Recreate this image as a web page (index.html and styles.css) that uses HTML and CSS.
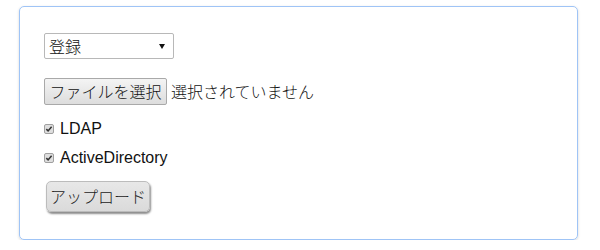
FILE: index.html
```html
<!DOCTYPE html>
<html lang="ja">
<head>
<meta charset="utf-8">
<title>Upload</title>
<link rel="stylesheet" href="styles.css">
</head>
<body>
<div class="card">
  <div class="row-select">
    <div class="select-wrap">
      <select class="select">
        <option>登録</option>
        <option>削除</option>
      </select>
      <span class="arrow"></span>
    </div>
  </div>
  <div class="row-file">
    <button class="file-btn" type="button">ファイルを選択</button>
    <span class="file-status">選択されていません</span>
  </div>
  <label class="check-row first">
    <span class="check"><svg width="10" height="10" viewBox="0 0 10 10"><path d="M2.3 5.1 L4.1 6.9 L7.6 2.7" fill="none" stroke="#333" stroke-width="1.5"/></svg></span>
    <span class="check-label">LDAP</span>
  </label>
  <label class="check-row">
    <span class="check"><svg width="10" height="10" viewBox="0 0 10 10"><path d="M2.3 5.1 L4.1 6.9 L7.6 2.7" fill="none" stroke="#333" stroke-width="1.5"/></svg></span>
    <span class="check-label">ActiveDirectory</span>
  </label>
  <div class="row-upload">
    <button class="upload-btn" type="button">アップロード</button>
  </div>
</div>
</body>
</html>
```
FILE: styles.css
```css
html, body {
  margin: 0;
  padding: 0;
  background: #ffffff;
}
body {
  font-family: "Liberation Sans", "Noto Sans CJK JP", Arial, sans-serif;
  font-size: 16px;
  color: #222;
}
.card {
  box-sizing: border-box;
  margin: 6px 0 0 19px;
  width: 559px;
  height: 234px;
  border: 1px solid #9fc4f6;
  border-radius: 5px;
  box-shadow: 0 1px 3px rgba(0, 0, 0, 0.16);
  padding: 26px 24px 0 24px;
  display: flex;
  flex-direction: column;
  align-items: flex-start;
}
.jp {
  font-family: "Noto Sans CJK JP", sans-serif;
}
.row-select {
  height: 26px;
  margin-bottom: 19px;
}
.select-wrap {
  position: relative;
  width: 130px;
  height: 26px;
}
.select {
  appearance: none;
  -webkit-appearance: none;
  box-sizing: border-box;
  width: 130px;
  height: 26px;
  margin: 0;
  padding: 0 0 0 4px;
  border: 1px solid #b8b8b8;
  border-radius: 2px;
  background: #fff;
  font-family: "Noto Sans CJK JP", sans-serif;
  font-weight: 300;
  font-size: 16px;
  line-height: 24px;
  color: #111;
  outline: none;
}
.arrow {
  position: absolute;
  right: 9px;
  top: 11px;
  width: 0;
  height: 0;
  border-left: 3px solid transparent;
  border-right: 3px solid transparent;
  border-top: 5px solid #111;
  pointer-events: none;
}
.row-file {
  display: flex;
  align-items: center;
  height: 27px;
  margin-bottom: 14px;
}
.file-btn {
  box-sizing: border-box;
  width: 123px;
  height: 27px;
  margin: 0;
  padding: 0;
  border: 1px solid #a9a9a9;
  border-radius: 2px;
  background: linear-gradient(#f4f4f4, #dddddd);
  font-family: "Noto Sans CJK JP", sans-serif;
  font-weight: 300;
  font-size: 16px;
  line-height: 25px;
  color: #111;
}
.file-status {
  margin-left: 4px;
  font-family: "Noto Sans CJK JP", sans-serif;
  font-weight: 300;
  font-size: 16px;
  line-height: 25px;
  color: #111;
}
.check-row {
  display: flex;
  align-items: center;
  height: 20px;
  margin-bottom: 9px;
}
.check-row + .check-row {
  margin-bottom: 13px;
}
.check {
  box-sizing: border-box;
  width: 10px;
  height: 10px;
  border: 1px solid #a0a0a0;
  border-radius: 2px;
  background: #dedede;
  display: flex;
  align-items: center;
  justify-content: center;
  margin-right: 6px;
}
.check svg {
  display: block;
  margin: -1px;
}
.check-label {
  line-height: 20px;
  color: #111;
}
.row-upload {
  padding-left: 2px;
}
.upload-btn {
  box-sizing: border-box;
  width: 104px;
  height: 31px;
  margin: 0;
  padding: 0 0 2px 0;
  border: 1px solid #bcbcbc;
  border-radius: 5px;
  background: linear-gradient(#e8e8e8, #dadada);
  box-shadow: 1px 2px 2px rgba(0, 0, 0, 0.45);
  font-family: "Noto Sans CJK JP", sans-serif;
  font-weight: 300;
  font-size: 16px;
  line-height: 26px;
  color: #222;
}
```
